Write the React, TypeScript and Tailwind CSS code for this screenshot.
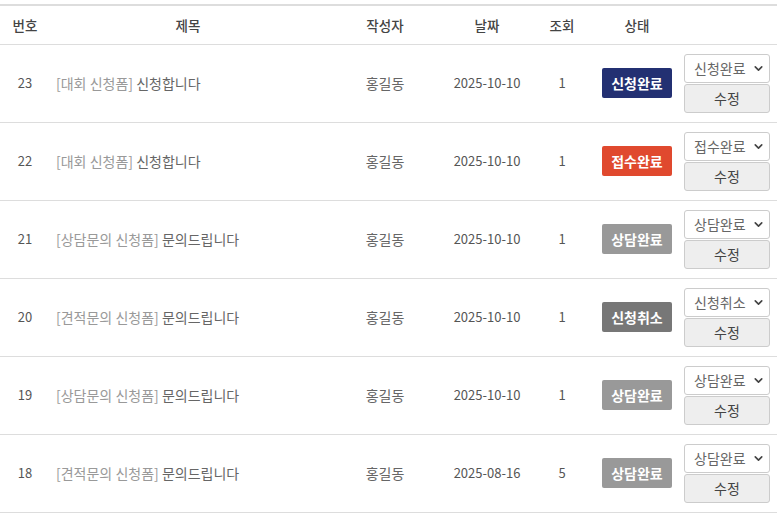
import { ChevronDown } from 'lucide-react'

type Row = {
  no: number
  prefix: string
  title: string
  author: string
  date: string
  views: number
  status: string
}

const rows: Row[] = [
  { no: 23, prefix: '[대회 신청폼]', title: '신청합니다', author: '홍길동', date: '2025-10-10', views: 1, status: '신청완료' },
  { no: 22, prefix: '[대회 신청폼]', title: '신청합니다', author: '홍길동', date: '2025-10-10', views: 1, status: '접수완료' },
  { no: 21, prefix: '[상담문의 신청폼]', title: '문의드립니다', author: '홍길동', date: '2025-10-10', views: 1, status: '상담완료' },
  { no: 20, prefix: '[견적문의 신청폼]', title: '문의드립니다', author: '홍길동', date: '2025-10-10', views: 1, status: '신청취소' },
  { no: 19, prefix: '[상담문의 신청폼]', title: '문의드립니다', author: '홍길동', date: '2025-10-10', views: 1, status: '상담완료' },
  { no: 18, prefix: '[견적문의 신청폼]', title: '문의드립니다', author: '홍길동', date: '2025-08-16', views: 5, status: '상담완료' },
]

const badgeClass: Record<string, string> = {
  신청완료: 'bg-[#233072]',
  접수완료: 'bg-[#e0492e]',
  상담완료: 'bg-[#999999]',
  신청취소: 'bg-[#777777]',
}

const font = { fontFamily: '"Noto Sans CJK KR", "Noto Sans", sans-serif' }

export default function App() {
  return (
    <div className="bg-white w-[777px] pt-1" style={font}>
      <table className="w-full border-collapse border-t-2 border-[#dddddd] text-[13px] text-[#555]">
        <colgroup>
          <col className="w-[50px]" />
          <col className="w-[276px]" />
          <col className="w-[118px]" />
          <col className="w-[86px]" />
          <col className="w-[64px]" />
          <col className="w-[86px]" />
          <col />
        </colgroup>
        <thead>
          <tr className="h-[39px] border-b border-[#dddddd] text-[#444] text-[13.5px]">
            <th className="font-medium">번호</th>
            <th className="font-medium">제목</th>
            <th className="font-medium">작성자</th>
            <th className="font-medium">날짜</th>
            <th className="font-medium">조회</th>
            <th className="font-medium">상태</th>
            <th />
          </tr>
        </thead>
        <tbody>
          {rows.map((r) => (
            <tr key={r.no} className="h-[78px] border-b border-[#dddddd]">
              <td className="text-center">{r.no}</td>
              <td className="pl-[6px] text-[14px] text-[#666]">
                <span className="text-[#999]">{r.prefix}</span> {r.title}
              </td>
              <td className="text-center text-[14px] text-[#666]">{r.author}</td>
              <td className="text-center">{r.date}</td>
              <td className="text-center">{r.views}</td>
              <td className="text-center">
                <span
                  className={`inline-flex items-center justify-center w-[70px] h-[30px] rounded-[2px] text-white font-bold text-[14px] ${badgeClass[r.status]}`}
                >
                  {r.status}
                </span>
              </td>
              <td className="pl-1 pr-[7px]">
                <div className="flex flex-col gap-[1px] w-[86px]">
                  <div className="h-[29px] border border-[#cccccc] rounded-[3px] flex items-center justify-between pl-[9px] pr-[4px] text-[14px] text-[#666]">
                    <span>{r.status}</span>
                    <ChevronDown size={13} strokeWidth={3} className="text-[#444]" />
                  </div>
                  <button className="h-[29px] bg-[#eeeeee] border border-[#cccccc] rounded-[3px] text-[#444] text-[14px]">
                    수정
                  </button>
                </div>
              </td>
            </tr>
          ))}
        </tbody>
      </table>
    </div>
  )
}
